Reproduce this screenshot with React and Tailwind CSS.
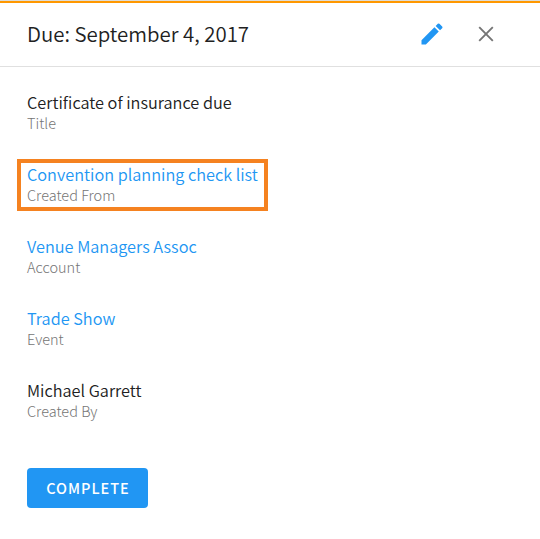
import React from "react";
import { MdEdit } from "react-icons/md";

const fields = [
  { label: "Title", value: "Certificate of insurance due" },
  { label: "Created From", value: "Convention planning check list", link: true, highlight: true },
  { label: "Account", value: "Venue Managers Assoc", link: true },
  { label: "Event", value: "Trade Show", link: true },
  { label: "Created By", value: "Michael Garrett" },
];

function CloseIcon() {
  return (
    <svg className="w-4 h-4" viewBox="0 0 16 16" fill="none" stroke="#757575" strokeWidth="1.9">
      <path d="M1.2 1.2l13.6 13.6M14.8 1.2L1.2 14.8" />
    </svg>
  );
}

function Field({ label, value, link, highlight }) {
  return (
    <div
      className={`self-start w-[251px] h-[52px] pl-1.5 border-4 ${
        highlight ? "border-[#f58220]" : "border-transparent"
      }`}
    >
      <p
        className={`text-[16.3px] leading-[22px] font-[350] whitespace-nowrap ${
          link ? "text-[#2196f3]" : "text-[#212121]"
        }`}
      >
        {link ? <a href="#">{value}</a> : value}
      </p>
      <p className="text-[14.5px] leading-5 font-light text-[#757575]">{label}</p>
    </div>
  );
}

function App() {
  return (
    <div className="h-[539px] bg-white overflow-hidden font-['Noto_Sans_CJK_SC',sans-serif]">
      <div className="h-px bg-[#dcdcd8]" />
      <div className="h-0.5 bg-[#ff9800]" />
      <header className="h-16 flex items-center pl-[27px] pr-[46px] pb-px border-b border-[#e0e0e0]">
        <h1 className="flex-1 pb-[3px] text-[20.4px] leading-7 font-[350] text-[#212121]">
          Due: September 4, 2017
        </h1>
        <button type="button" aria-label="Edit" className="mr-[32px]">
          <MdEdit className="w-7 h-7 text-[#2196f3]" />
        </button>
        <button type="button" aria-label="Close">
          <CloseIcon />
        </button>
      </header>
      <main className="flex flex-col gap-5 pt-5 pl-[17px]">
        {fields.map((field) => (
          <Field key={field.label} {...field} />
        ))}
      </main>
      <button
        type="button"
        className="ml-[27px] mt-[41px] w-[121px] h-10 pl-px rounded bg-[#2196f3] text-white text-[14.5px] font-medium tracking-[1px]"
      >
        COMPLETE
      </button>
    </div>
  );
}

export default App;
